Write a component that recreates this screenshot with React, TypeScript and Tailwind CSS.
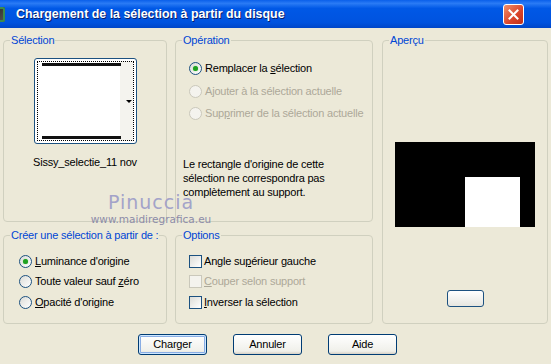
import React from 'react'

const font = { fontFamily: '"Liberation Sans", Arial, sans-serif' }

const Radio = ({ checked, disabled }: { checked?: boolean; disabled?: boolean }) => (
  <span
    className={`flex h-[13px] w-[13px] shrink-0 items-center justify-center rounded-full border ${
      disabled
        ? 'border-[#CAC8BB] bg-[#F4F3EE]'
        : 'border-[#1C5180] bg-[linear-gradient(135deg,#DCDCD7,#FFFFFF)]'
    }`}
  >
    {checked && <span className="h-[5px] w-[5px] rounded-full bg-[#21A121] shadow-[0_0_1px_#5FCF5F]" />}
  </span>
)

const Check = ({ disabled }: { disabled?: boolean }) => (
  <span
    className={`h-[13px] w-[13px] shrink-0 border ${
      disabled
        ? 'border-[#CAC8BB] bg-[#F4F3EE]'
        : 'border-[#1C5180] bg-[linear-gradient(135deg,#DCDCD7,#FFFFFF)]'
    }`}
  />
)

const Group = ({
  title,
  className,
  children,
}: {
  title: string
  className?: string
  children: React.ReactNode
}) => (
  <fieldset className={`rounded-[4px] border border-[#D0D0BF] ${className ?? ''}`}>
    <legend className="ml-[6px] whitespace-nowrap px-[1px] text-[11px] leading-[13px] tracking-[-0.2px] text-[#0046D5]">
      {title}
    </legend>
    {children}
  </fieldset>
)

const XpButton = ({ label, primary }: { label: string; primary?: boolean }) => (
  <button
    className={`h-[21px] w-[69px] rounded-[3px] border border-[#003C74] bg-[linear-gradient(#FFFFFF,#F0F0EA_85%,#D6D0C5)] text-[11px] tracking-[-0.2px] text-black ${
      primary ? 'shadow-[inset_0_0_0_1px_#CEE7FF,inset_0_0_0_2px_#89ADE4]' : ''
    }`}
  >
    {label}
  </button>
)

export default function App() {
  return (
    <div className="relative h-[364px] w-[551px] overflow-hidden bg-[#ECE9D8]" style={font}>
      {/* title bar */}
      <div className="flex h-[28px] items-center bg-[linear-gradient(#0A5FEA,#2A7BF5_12%,#0058E6_30%,#0053DF_80%,#0046C8)]">
        <div className="ml-[-10px] h-[15px] w-[15px] rounded-[2px] bg-[linear-gradient(135deg,#222,#555)] shadow-[inset_0_0_0_2px_#3C8C4C]" />
        <span className="ml-[11px] text-[12.4px] font-bold text-white [text-shadow:1px_1px_#0A1F6A]">
          Chargement de la sélection à partir du disque
        </span>
        <div className="ml-auto mr-[27px] flex h-[21px] w-[21px] items-center justify-center rounded-[3px] border border-white bg-[linear-gradient(135deg,#F0906A,#D9432A_60%,#C03018)]">
          <svg width="11" height="11" viewBox="0 0 11 11">
            <path d="M1.5 1.5 L9.5 9.5 M9.5 1.5 L1.5 9.5" stroke="white" strokeWidth="2" strokeLinecap="square" />
          </svg>
        </div>
      </div>

      {/* groups */}
      <div className="grid grid-cols-[164px_198px_167px] grid-rows-[188px_95px] gap-x-[8px] gap-y-[7px] pl-[3px] pt-[6px] text-[11px] leading-[13px] tracking-[-0.2px]">
        <Group title="Sélection">
          <div className="flex flex-col items-center">
            <div className="relative mt-[11px] h-[86px] w-[103px] rounded-[3px] border border-[#1C5180] bg-white p-[2px]">
              <div className="flex h-full w-full flex-col justify-between border border-dotted border-black bg-[linear-gradient(90deg,#FFFFFF_86%,#F4F3EE_86%)] px-[4px] py-[1px]">
                <div className="h-[3px] w-[79px] bg-[#111]" />
                <div className="h-[3px] w-[79px] bg-[#111]" />
              </div>
              <div className="absolute right-[4px] top-[41px] h-0 w-0 border-x-[3px] border-t-[3px] border-x-transparent border-t-black" />
            </div>
            <div className="mt-[12px] text-black">Sissy_selectie_11 nov</div>
          </div>
        </Group>

        <Group title="Opération">
          <div className="mt-[10px] flex flex-col pl-[13px]">
            <div className="flex h-[23px] items-center gap-[3px] text-black">
              <Radio checked />
              <span>
                Remplacer la <u>s</u>élection
              </span>
            </div>
            <div className="flex h-[22px] items-center gap-[3px] text-[#ACA899]">
              <Radio disabled />
              <span>Ajouter à la sélection actuelle</span>
            </div>
            <div className="flex h-[22px] items-center gap-[3px] text-[#ACA899]">
              <Radio disabled />
              <span>
                Sup<u>p</u>rimer de la sélection actuelle
              </span>
            </div>
          </div>
          <p className="mt-[33px] pl-[7px] leading-[14px] text-black">
            Le rectangle d'origine de cette
            <br />
            sélection ne correspondra pas
            <br />
            complètement au support.
          </p>
        </Group>

        <Group title="Aperçu" className="row-span-2 ml-[1px]">
          <div className="flex flex-col items-center">
            <div className="mt-[95px] flex h-[85px] w-[140px] items-end bg-black pl-[70px]">
              <div className="h-[50px] w-[55px] bg-white" />
            </div>
            <div className="mt-[63px] h-[17px] w-[37px] rounded-[3px] border border-[#1C5180] bg-[linear-gradient(#FFFFFF,#E6E6E0)]" />
          </div>
        </Group>

        <Group title="Créer une sélection à partir de :">
          <div className="mt-[9px] flex flex-col pl-[15px] text-black">
            <div className="flex h-[20px] items-center gap-[3px]">
              <Radio checked />
              <span>
                <u>L</u>uminance d'origine
              </span>
            </div>
            <div className="flex h-[21px] items-center gap-[3px]">
              <Radio />
              <span>
                Toute valeur sauf <u>z</u>éro
              </span>
            </div>
            <div className="flex h-[20px] items-center gap-[3px]">
              <Radio />
              <span>
                <u>O</u>pacité d'origine
              </span>
            </div>
          </div>
        </Group>

        <Group title="Options">
          <div className="mt-[9px] flex flex-col pl-[13px] text-black">
            <div className="flex h-[20px] items-center gap-[2px]">
              <Check />
              <span>
                Angle su<u>p</u>érieur gauche
              </span>
            </div>
            <div className="flex h-[21px] items-center gap-[2px] text-[#ACA899]">
              <Check disabled />
              <span>
                <u>C</u>ouper selon support
              </span>
            </div>
            <div className="flex h-[20px] items-center gap-[2px]">
              <Check />
              <span>
                <u>I</u>nverser la sélection
              </span>
            </div>
          </div>
        </Group>
      </div>

      {/* buttons */}
      <div className="mt-[10px] flex gap-[26px] pl-[138px]">
        <XpButton label="Charger" primary />
        <XpButton label="Annuler" />
        <XpButton label="Aide" />
      </div>

      {/* watermark */}
      <div className="pointer-events-none absolute left-[88px] top-[191px] flex w-[126px] flex-col items-center">
        <span className="text-[19px] leading-[22px] tracking-[1px] text-[#A3A3C9]" style={{ fontFamily: '"DejaVu Sans", sans-serif' }}>
          Pinuccia
        </span>
        <span className="text-[10.5px] leading-[12px] text-[#8C8CA8]" style={{ fontFamily: '"DejaVu Sans", sans-serif' }}>
          www.maidiregrafica.eu
        </span>
      </div>
    </div>
  )
}
